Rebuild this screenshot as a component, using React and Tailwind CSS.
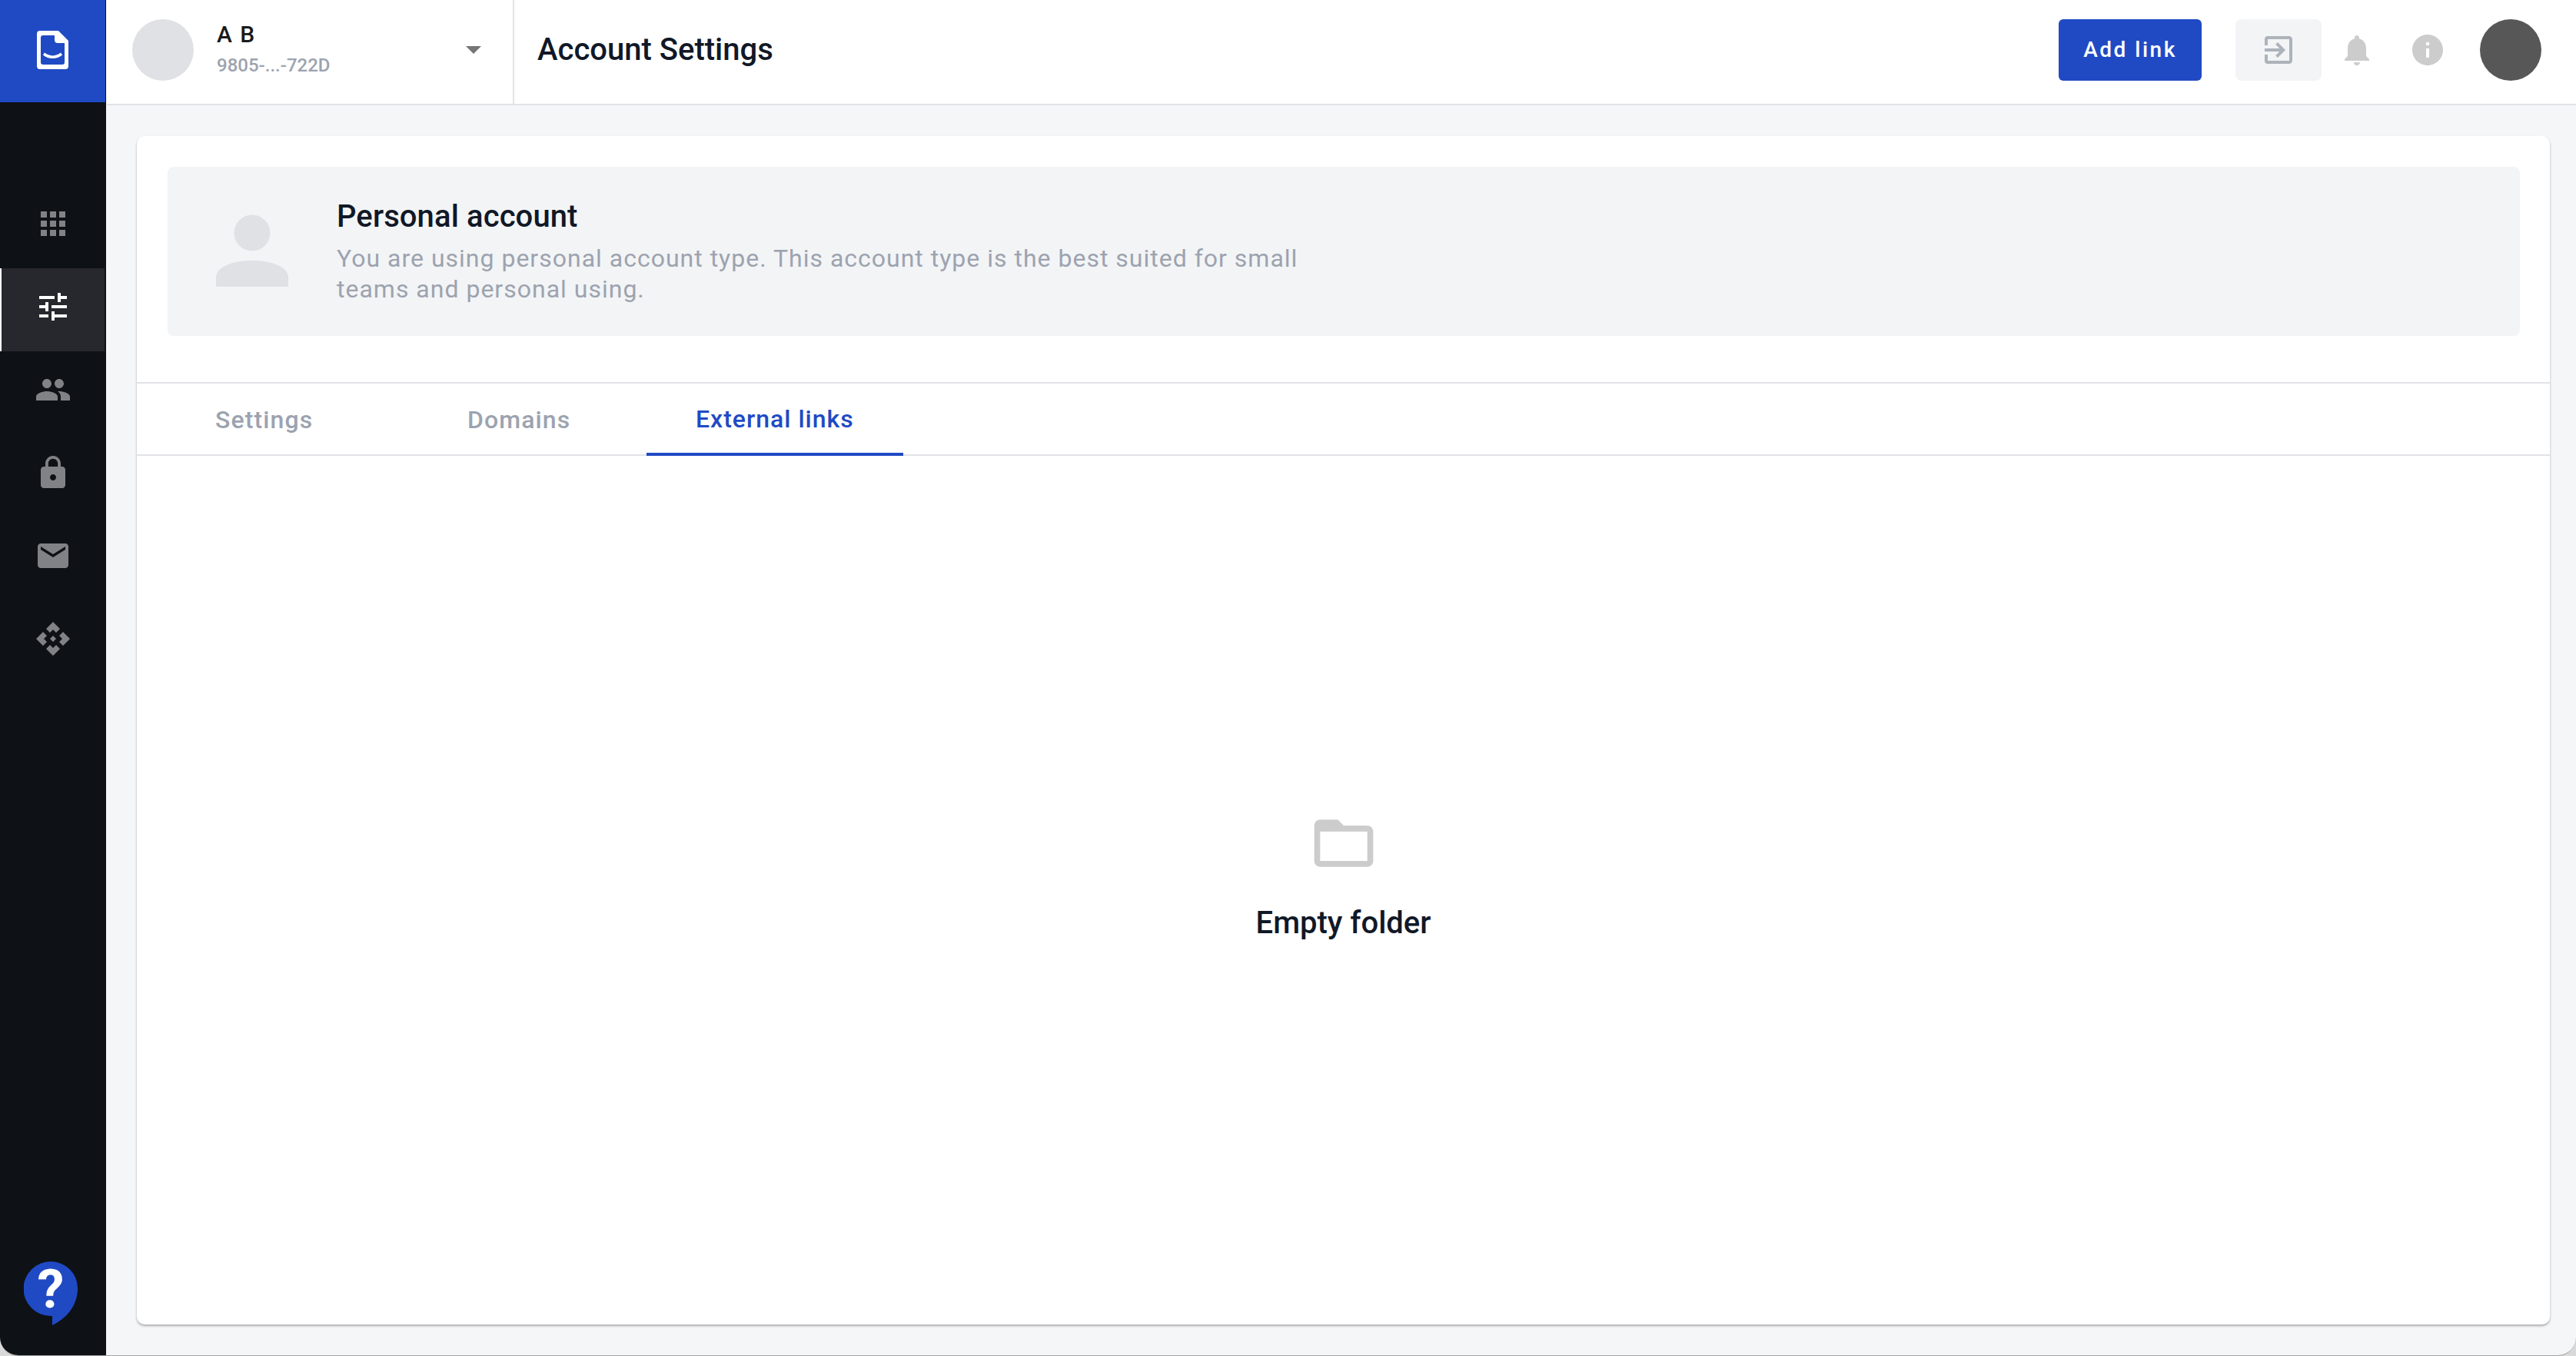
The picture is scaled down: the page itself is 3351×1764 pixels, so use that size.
import React from "react";
import { MdApps, MdTune, MdPeople, MdLock, MdEmail, MdNotifications, MdInfo, MdExitToApp, MdFolderOpen } from "react-icons/md";

const font = { fontFamily: "Roboto, sans-serif" };

function Logo() {
  return (
    <svg width="41" height="50" viewBox="0 0 41 50">
      <path fillRule="evenodd" fill="#fff" d="M4 0H28L41 13V46a4 4 0 0 1-4 4H4a4 4 0 0 1-4-4V4a4 4 0 0 1 4-4ZM8 6a3 3 0 0 0-3 3V41a3 3 0 0 0 3 3H33a3 3 0 0 0 3-3V16H27a4 4 0 0 1-4-4V6Z" />
      <path d="M9 30c7 5.500 16 5.500 23 0" fill="none" stroke="#fff" strokeWidth="3.500" />
    </svg>
  );
}

function Widget() {
  return (
    <svg width="44" height="44" viewBox="0 0 44 44" fill="#808285">
      <path d="M22 0 31 9 26 14 22 10 18 14 13 9Z" />
      <path d="M22 44 31 35 26 30 22 34 18 30 13 35Z" />
      <path d="M0 22 9 13 14 18 10 22 14 26 9 31Z" />
      <path d="M44 22 35 13 30 18 34 22 30 26 35 31Z" />
      <path d="M22 18 26 22 22 26 18 22Z" />
    </svg>
  );
}

function NavItem({ icon: Icon, active, custom }) {
  return (
    <div className={`h-[108px] w-[136px] flex pt-[26px] ${active ? "bg-[#26282d] border-l-2 border-white pl-[43px]" : "pl-[45px]"}`}>
      <div className="w-[48px] h-[48px] flex items-center justify-center">
        {custom ? custom : <Icon size={48} color={active ? "#ffffff" : "#808285"} />}
      </div>
    </div>
  );
}

export default function App() {
  return (
    <div className="w-[3351px] h-[1764px] bg-[#d9d9d9]">
      <div className="w-full h-full flex bg-[#f5f6f8] overflow-hidden rounded-b-[24px] border-b border-[#a3a3a3]" style={font}>
        <aside className="w-[138px] h-full shrink-0 bg-[#0e1116] flex flex-col">
          <div className="h-[133px] w-[137px] bg-[#204ac4] flex items-center justify-center pb-[3px]">
            <Logo />
          </div>
          <nav className="pt-[108px] flex flex-col">
            <NavItem icon={MdApps} />
            <NavItem icon={MdTune} active />
            <NavItem icon={MdPeople} />
            <NavItem icon={MdLock} />
            <NavItem icon={MdEmail} />
            <NavItem custom={<Widget />} />
          </nav>
          <div className="mt-auto pl-[31px] pb-[39px]">
            <div className="relative w-[70px] h-[83px]">
              <svg width="70" height="83" viewBox="0 0 70 83">
                <path fill="#204ac4" d="M35 0a35 35 0 0 1 35 35c0 22-14 39-33 48V71h-2A35.500 35.500 0 0 1 35 0Z" />
              </svg>
              <span className="absolute inset-x-0 top-[-4px] text-center text-[70px] leading-[80px] font-bold text-white">?</span>
            </div>
          </div>
        </aside>

        <div className="flex-1 min-w-0 flex flex-col">
          <header className="h-[137px] ml-px bg-white border-b-2 border-[#e1e3e7] flex items-center shrink-0">
            <div className="w-[530px] h-full border-r-2 border-[#e1e3e7] flex items-center pl-[33px] pb-[5px] shrink-0">
              <div className="w-[80px] h-[80px] rounded-full bg-[#e0e1e4] shrink-0" />
              <div className="ml-[30px] mb-[3px] flex flex-col w-[324px]">
                <span className="text-[30px] leading-[36px] font-medium tracking-[1.5px] text-[#1a1a1a]">A B</span>
                <span className="text-[24px] leading-[32px] text-[#9ca3af] mt-[6px] font-medium">9805-...-722D</span>
              </div>
              <svg width="20" height="10" viewBox="0 0 20 10"><path d="M0 0H20L10 10Z" fill="#757575" /></svg>
            </div>
            <h1 className="ml-[30px] mb-[5px] text-[40px] leading-[48px] font-medium text-[#111827]">Account Settings</h1>
            <div className="ml-auto flex items-center pr-[45px] pb-[5px]">
              <button className="w-[186px] h-[80px] rounded-[6px] bg-[#204ac4] text-white text-[28px] font-medium tracking-[2.5px]">Add link</button>
              <div className="ml-[44px] w-[112px] h-[80px] rounded-[8px] bg-[#f3f4f6] flex items-center justify-center">
                <MdExitToApp size={48} color="#adb3bb" />
              </div>
              <div className="ml-[22px] w-[48px] h-[48px]"><MdNotifications size={48} color="#cccccc" /></div>
              <div className="ml-[44px] w-[48px] h-[48px]"><MdInfo size={48} color="#cccccc" /></div>
              <div className="ml-[44px] w-[80px] h-[80px] rounded-full bg-[#575757]" />
            </div>
          </header>

          <main className="flex-1 min-h-0 pt-[40px] pl-[40px] pr-[34px] pb-[40px]">
            <div className="h-full bg-white rounded-[10px] shadow-[0_2px_3px_rgba(0,0,0,0.3)] flex flex-col">
              <div className="pt-[40px] pl-[40px] pr-[39px]">
                <div className="h-[220px] rounded-[8px] bg-[#f3f4f6] flex items-center">
                  <svg width="96" height="96" viewBox="0 0 96 96" className="ml-[62px] shrink-0">
                    <circle cx="48" cy="24" r="23.500" fill="#dfe1e4" />
                    <path d="M1 94V82c0-15 24-22 47-22s47 7 47 22v12Z" fill="#dfe1e4" />
                  </svg>
                  <div className="ml-[62px] w-[1300px]">
                    <h2 className="text-[40px] leading-[48px] font-medium tracking-[0.1px] text-[#111827]">Personal account</h2>
                    <p className="mt-[10px] text-[32px] leading-[40px] tracking-[1px] text-[#9ca3af]">You are using personal account type. This account type is the best suited for small teams and personal using.</p>
                  </div>
                </div>
              </div>
              <div className="mt-[60px] h-[96px] border-y-2 border-[#e1e3e7] flex pl-[38px] shrink-0">
                <div className="w-[328px] h-[92px] pl-[64px] pt-[2px] flex items-center text-[32px] font-medium tracking-[1.1px] text-[#9ca3af]">Settings</div>
                <div className="w-[297px] h-[92px] pl-[64px] pt-[2px] flex items-center text-[32px] font-medium tracking-[1.1px] text-[#9ca3af]">Domains</div>
                <div className="h-[94px] px-[64px] pt-[2px] flex items-center text-[32px] font-medium tracking-[1px] text-[#204ac4] border-b-4 border-[#204ac4]">External links</div>
              </div>
              <div className="flex-1 flex flex-col items-center justify-center pb-[40px]">
                <MdFolderOpen size={92} color="#cccccc" />
                <p className="mt-[34px] text-[40px] leading-[48px] font-medium text-[#111827]">Empty folder</p>
              </div>
            </div>
          </main>
        </div>
      </div>
    </div>
  );
}
